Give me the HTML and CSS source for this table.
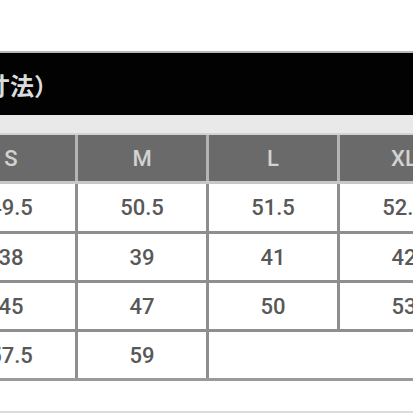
FILE: index.html
```html
<!DOCTYPE html>
<html lang="ja">
<head>
<meta charset="utf-8">
<link rel="stylesheet" href="styles.css">
</head>
<body>
<div class="page">
  <div class="top"></div>
  <div class="banner"><span class="title">寸法）</span></div>
  <div class="band"></div>
  <div class="table">
    <div class="head">
      <div class="hcell">S</div>
      <div class="hcell">M</div>
      <div class="hcell">L</div>
      <div class="hcell">XL</div>
    </div>
    <div class="grid">
      <div class="cell tall">49.5</div>
      <div class="cell tall">50.5</div>
      <div class="cell tall">51.5</div>
      <div class="cell tall">52.5</div>
      <div class="cell">38</div>
      <div class="cell">39</div>
      <div class="cell">41</div>
      <div class="cell">42</div>
      <div class="cell">45</div>
      <div class="cell">47</div>
      <div class="cell">50</div>
      <div class="cell">53</div>
      <div class="cell">57.5</div>
      <div class="cell">59</div>
      <div class="cell span2"></div>
    </div>
  </div>
  <div class="foot"></div>
</div>
</body>
</html>
```
FILE: styles.css
```css
html, body {
  margin: 0;
  padding: 0;
  background: #ffffff;
  overflow: hidden;
}
.page {
  width: 413px;
  height: 413px;
  overflow: hidden;
  display: flex;
  flex-direction: column;
  font-family: "Roboto", "Liberation Sans", sans-serif;
}
.top {
  height: 51px;
  background: #ffffff;
  border-bottom: 2px solid #b8b8b8;
  flex: none;
}
.banner {
  height: 62px;
  background: #020202;
  display: flex;
  align-items: center;
  flex: none;
}
.title {
  margin-left: -14px;
  color: #dcdcdc;
  font-family: "Noto Sans CJK JP", "Noto Sans", sans-serif;
  font-size: 24px;
  font-weight: 700;
  letter-spacing: 0;
  white-space: nowrap;
}
.band {
  height: 18px;
  background: #e9e9e9;
  border-bottom: 2px solid #d2d2d2;
  flex: none;
}
.table {
  margin-left: -53px;
  width: 521px;
  flex: none;
}
.head {
  display: grid;
  grid-template-columns: repeat(4, 128px);
  column-gap: 3px;
  background: #b4b4b4;
  border-bottom: 3px solid #c8c8c8;
}
.hcell {
  height: 46px;
  background: #6a6a6a;
  color: #d2d2d2;
  font-size: 22px;
  font-weight: 500;
  display: flex;
  align-items: center;
  justify-content: center;
}
.grid {
  display: grid;
  grid-template-columns: repeat(4, 128px);
  column-gap: 3px;
  row-gap: 3px;
  background: #8e8e8e;
  border-bottom: 3px solid #9a9a9a;
}
.cell {
  height: 46px;
  background: #ffffff;
  color: #585858;
  font-size: 22px;
  font-weight: 500;
  display: flex;
  align-items: center;
  justify-content: center;
}
.cell.tall {
  height: 47px;
}
.span2 {
  grid-column: span 2;
}
.foot {
  flex: 1;
  background: #ffffff;
  border-bottom: 2px solid #dddddd;
}
```
